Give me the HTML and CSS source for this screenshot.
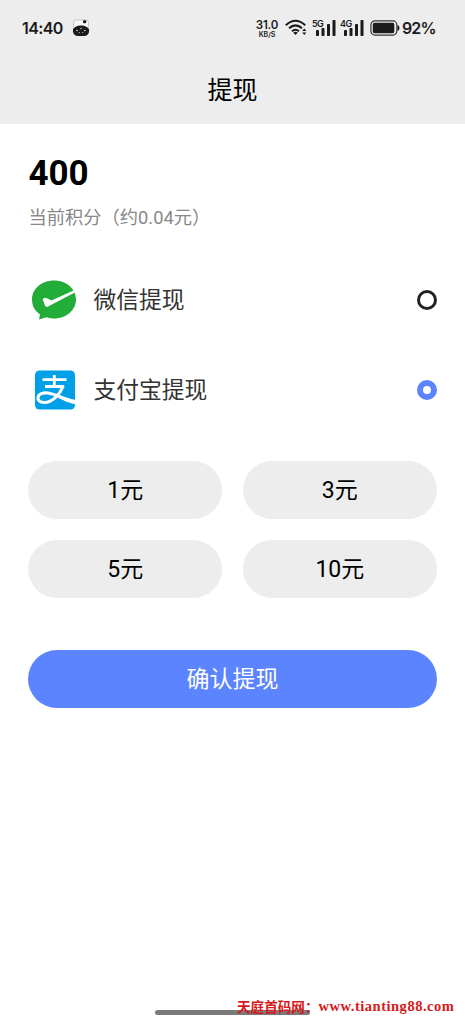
FILE: index.html
```html
<!DOCTYPE html>
<html lang="zh-CN">
<head>
<meta charset="utf-8">
<meta name="viewport" content="width=device-width, initial-scale=1">
<title>提现</title>
<link rel="stylesheet" href="styles.css">
</head>
<body>
<div class="screen">
  <header class="header">
    <div class="status">
      <span class="clock">14:40</span>
      <svg class="app-icon" width="18" height="18" viewBox="0 0 18 18">
        <path d="M1.500 8V3.500Q1.500 1 4 1H14Q16.500 1 16.500 3.500V8" fill="#f7f7f7" stroke="#bbb" stroke-width=".8"/>
        <rect x="11" y="1.300" width="3.200" height="3" rx="1" fill="#1b1b1b"/>
        <path d="M1 10Q4 6.200 9 6.500Q14 6.200 17 10V13Q16 17 12 17H6Q2 17 1 13Z" fill="#1b1b1b"/>
        <g fill="#ddd"><circle cx="5" cy="11.500" r=".8"/><circle cx="9" cy="9.500" r=".7"/><circle cx="12.800" cy="11.500" r=".8"/><circle cx="7.300" cy="13.500" r=".6"/><circle cx="10.700" cy="13.500" r=".6"/></g>
      </svg>
      <span class="speed"><b>31.0</b><small>KB/S</small></span>
      <svg class="wifi" width="23" height="18" viewBox="0 0 23 18" fill="none" stroke="#1b1b1b" stroke-width="2.100">
        <path d="M.8 6.300Q10.500 -2.800 20.200 6.300"/>
        <path d="M4 9.300Q10.500 3.400 17 9.300"/>
        <path d="M7 12.300Q10.500 9.200 14 12.300"/>
        <path d="M8.200 13.500Q10.500 11.800 12.800 13.500L10.500 16Z" fill="#1b1b1b" stroke="none"/>
        <path d="M17.200 12L19.300 9.500L21.400 12ZM17.200 13.500L19.300 16L21.400 13.500Z" fill="#1b1b1b" stroke="none"/>
      </svg>
      <span class="signal"><i>5G</i>
        <svg width="20" height="16" viewBox="0 0 20 16" fill="#1b1b1b"><rect y="10" width="3" height="6" rx=".7"/><rect x="5.500" y="8" width="3" height="8" rx=".7"/><rect x="11" y="4" width="3" height="12" rx=".7"/><rect x="16.500" width="3" height="16" rx=".7"/></svg>
      </span>
      <span class="signal"><i>4G</i>
        <svg width="20" height="16" viewBox="0 0 20 16" fill="#1b1b1b"><rect y="10" width="3" height="6" rx=".7"/><rect x="5.500" y="8" width="3" height="8" rx=".7"/><rect x="11" y="4" width="3" height="12" rx=".7"/><rect x="16.500" width="3" height="16" rx=".7"/></svg>
      </span>
      <svg class="battery" width="30" height="16" viewBox="0 0 30 16">
        <rect x=".9" y=".9" width="26" height="14.200" rx="4" fill="none" stroke="#333" stroke-width="1.200"/>
        <rect x="2.800" y="2.800" width="21.500" height="10.400" rx="1.800" fill="#1b1b1b"/>
        <path d="M27.500 5Q29.500 5.500 29.500 8Q29.500 10.500 27.500 11Z" fill="#1b1b1b"/>
      </svg>
      <span class="percent">92%</span>
    </div>
    <h1 class="title">提现</h1>
  </header>

  <main class="content">
    <div class="points">400</div>
    <p class="caption">当前积分（约0.04元）</p>

    <div class="method">
      <svg class="logo" width="52" height="52" viewBox="0 0 52 52">
        <path d="M26 6.500C13.500 6.500 4 15 4 25.500C4 32 7 37 12 40.500L11 45.500L18.500 43.200C21 44 23.500 44.500 26 44.500C38.500 44.500 48 36 48 25.500C48 15 38.500 6.500 26 6.500Z" fill="#22ac38"/>
        <path d="M14.800 25.500Q16 22.500 19 24.300L23.500 26.500L46.500 16L47.300 18.300L20.500 32.200Q18 33.500 17 31.500Z" fill="#fff"/>
      </svg>
      <span class="name">微信提现</span>
      <span class="radio"></span>
    </div>
    <div class="method">
      <svg class="logo" width="52" height="52" viewBox="0 0 52 52">
        <rect x="7" y="6.500" width="40" height="39" rx="4.500" fill="#00a0e9"/>
        <g fill="none" stroke="#fff" stroke-width="2.800">
          <path d="M14.500 15.700H38.500M26.300 11V22.500M17 22.500H36.200"/>
          <path d="M35 22.500C31.500 31 24 38.500 16.500 38.500C11.500 38.500 9.500 36 10 33.500C10.500 30 15 28.300 20 29C28 30 35 35.500 47 37.500" stroke-width="3.100"/>
        </g>
        <path d="M32 32Q38 35.500 47 36V40.300Q38 38.500 30 33.500Z" fill="#fff"/>
      </svg>
      <span class="name">支付宝提现</span>
      <span class="radio checked"></span>
    </div>

    <div class="amounts">
      <button class="pill">1元</button>
      <button class="pill">3元</button>
      <button class="pill">5元</button>
      <button class="pill">10元</button>
    </div>
    <button class="pill confirm">确认提现</button>
  </main>
  <div class="home-bar"></div>
  <div class="watermark">天庭首码网：<span class="url">www.tianting88.com</span></div>
</div>
</body>
</html>
```

FILE: styles.css
```css
* { box-sizing: border-box; }
body {
  margin: 0;
  background: #fff;
  font-family: Roboto, "Noto Sans CJK SC", sans-serif;
  color: #000;
}
.screen { position: relative; height: 1024px; overflow: hidden; }
.header { height: 124px; background: #ededed; }
.status {
  display: flex;
  align-items: center;
  height: 56px;
  padding-left: 22px;
  color: #1b1b1b;
  font-family: Inter, sans-serif;
  font-weight: 600;
}
.clock { width: 50px; font-size: 16px; line-height: 20px; letter-spacing: -0.6px; white-space: nowrap; }
.app-icon { flex: none; margin-right: 166px; }
.speed { display: flex; flex-direction: column; align-items: center; width: 22px; margin-right: 7px; }
.speed b { font-size: 11.5px; line-height: 12px; font-weight: 600; letter-spacing: -0.2px; }
.speed small { font-size: 7px; line-height: 7px; }
.wifi { flex: none; margin-right: 5px; }
.signal { position: relative; flex: none; width: 28px; height: 16px; padding-left: 3px; }
.signal svg { display: block; }
.signal i { position: absolute; left: -1px; top: -1px; font-size: 9px; line-height: 9px; font-style: normal; letter-spacing: -0.6px; }
.battery { flex: none; margin-left: 1px; margin-right: 2px; }
.percent { font-size: 16px; line-height: 20px; letter-spacing: -0.9px; }
.title { margin: 0; padding-top: 16px; text-align: center; font-size: 25px; line-height: 38px; font-weight: 400; }
.content { padding: 28px 28.4px 0; }
.points { font-size: 35px; line-height: 44px; font-weight: 700; }
.caption { margin: 8px 0 0; font-size: 18.3px; line-height: 28px; color: #888; white-space: nowrap; }
.method { display: flex; align-items: center; height: 52px; margin-top: 38px; }
.caption + .method { margin-top: 42px; }
.logo { flex: none; margin-right: 13px; }
.name { flex: 1; padding-top: 2px; font-size: 22.8px; line-height: 32px; color: #333; }
.radio { width: 20px; height: 20px; border: 3px solid #222; border-radius: 50%; }
.radio.checked { border: 6px solid #5b84fe; }
.amounts { display: grid; grid-template-columns: 1fr 1fr; gap: 21px; margin-top: 45px; }
.pill {
  height: 58px;
  padding: 2px 0 0;
  border: 0;
  border-radius: 29px;
  background: #ededed;
  color: #000;
  font: 400 23px/34px Roboto, "Noto Sans CJK SC", sans-serif;
}
.confirm { display: block; width: 100%; margin-top: 52px; background: #5b84fe; color: #fff; }
.home-bar { position: absolute; left: 155px; top: 1010px; width: 155px; height: 5px; border-radius: 3px; background: #7b7b7b; }
.watermark {
  position: absolute;
  left: 237px;
  top: 996px;
  display: flex;
  font: 700 13.6px/20px "Noto Sans CJK SC", sans-serif;
  color: #d71920;
  white-space: nowrap;
}
.url { font-family: "Liberation Serif", serif; font-size: 14.5px; line-height: 21px; letter-spacing: 0.52px; }
```
